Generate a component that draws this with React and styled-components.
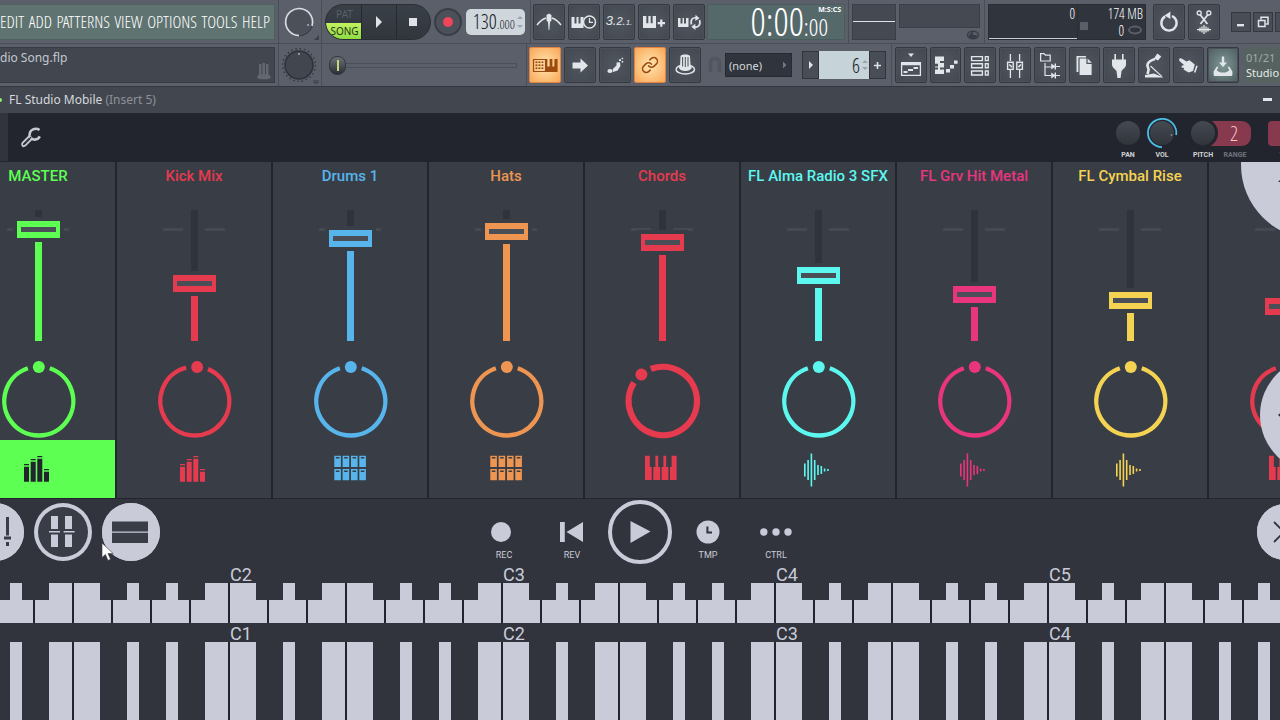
import React, { useState } from 'react';
import styled, { createGlobalStyle, css } from 'styled-components';
import { Link } from 'lucide-react';

const CONDENSED = `'Open Sans Condensed Light', 'Open Sans Condensed', 'Roboto Condensed', 'Open Sans', sans-serif`;
const UI = `'Noto Sans', 'Open Sans', sans-serif`;
const MOBILE = `Roboto, 'Liberation Sans', sans-serif`;

const GREEN = '#5dff53';
const RED = '#e63a4f';
const BLUE = '#57b5ec';
const ORANGE = '#ee9552';
const CYAN = '#5cf8ef';
const PINK = '#e8357d';
const YELLOW = '#f4d352';

const PANEL = '#393d46';
const LINE = '#22252e';
const DECK = '#31343d';
const IVORY = '#c9cbd8';

const CHANNELS = [
  { name: 'MASTER', color: GREEN, level: 103, pan: 0, icon: 'mix', selected: true },
  { name: 'Kick Mix', color: RED, level: 49, pan: 4, icon: 'mix' },
  { name: 'Drums 1', color: BLUE, level: 94, pan: 0, icon: 'pads' },
  { name: 'Hats', color: ORANGE, level: 101, pan: 0, icon: 'pads' },
  { name: 'Chords', color: RED, level: 90, pan: -39, icon: 'piano', thick: true },
  { name: 'FL Alma Radio 3 SFX', color: CYAN, level: 57, pan: 0, icon: 'wave' },
  { name: 'FL Grv Hit Metal', color: PINK, level: 38, pan: 0, icon: 'wave' },
  { name: 'FL Cymbal Rise', color: YELLOW, level: 32, pan: 0, icon: 'wave' },
  { name: '', color: RED, level: 26, pan: 0, icon: 'piano' }
];

const MENU = ['EDIT', 'ADD', 'PATTERNS', 'VIEW', 'OPTIONS', 'TOOLS', 'HELP'];

/* ---------- channel icons ---------- */

const MixGlyph = () => (
  <g>
    {[[2, 13], [8.7, 8], [15.3, 5], [22, 18]].map(([x, y]) => (
      <path key={x} d={`M${x} ${y}h5v1.3h-5zM${x} ${y + 2.8}h5V30.7h-5z`} />
    ))}
  </g>
);

const PadsGlyph = () => (
  <g fillRule='evenodd'>
    {[0.3, 8.6, 17, 25.3].map(x =>
      [4.7, 18].map(y => (
        <path
          key={`${x}-${y}`}
          d={`M${x} ${y}h6.6v11.2h-6.6zM${x + 1.5} ${y + 1.4}v1.5h3.6v-1.5z`}
        />
      ))
    )}
  </g>
);

const PianoGlyph = () => (
  <path
    transform='translate(-1 0)'
    d='M0 4.7H4.8V16H6.7V29H0zM10.4 4.7H13.2V16H15.2V29H8.3V16H10.4zM18.4 4.7H21.2V16H23.4V29H16.6V16H18.4zM26.6 4.7H31.6V29H25V16H26.6z'
  />
);

const WaveGlyph = () => (
  <g>
    {[13, 20, 33, 20, 10, 8, 3, 2].map((h, i) => (
      <rect key={i} x={2 + i * 3.3} y={19 - h / 2} width='1.6' height={h} />
    ))}
  </g>
);

const GLYPHS = { mix: MixGlyph, pads: PadsGlyph, piano: PianoGlyph, wave: WaveGlyph };

/* ---------- toolbar icons, drawn on a 32 x 36 button ---------- */

const Icon = ({ children }) => (
  <svg width='32' height='36' viewBox='0 0 32 36' fill='currentColor' aria-hidden='true'>
    {children}
  </svg>
);

// solid block of white keys with two black notches hanging from the top
const keysPath = (x, y, w, h) => {
  const u = w / 3;
  const n = h * 0.6;
  return `M${x} ${y}H${x + u - 1}V${y + n}H${x + u + 1}V${y}H${x + 2 * u - 1}V${y + n}H${x + 2 * u + 1}V${y}H${x + w}V${y + h}H${x}z`;
};

const TOOLS_TOP = [
  {
    label: 'Metronome',
    icon: (
      <Icon>
        <path d='M4 21C7 17 10 15 13 14M19 14C22 15 25 17 28 21' fill='none' stroke='currentColor' strokeWidth='1.4' />
        <path d='M13.5 11L16 9.5L18.5 11V16.5L17 18L16.4 26H15.6L15 18L13.5 16.5z' />
      </Icon>
    )
  },
  {
    label: 'Wait for input',
    icon: (
      <Icon>
        <path d={keysPath(3.5, 13, 12, 11)} />
        <circle cx='21.5' cy='18' r='6' fill='#464c54' stroke='currentColor' strokeWidth='1.5' />
        <path d='M21.5 14V18.4H25' fill='none' stroke='currentColor' strokeWidth='1.3' />
      </Icon>
    )
  },
  { label: 'Countdown', count: true },
  {
    label: 'Overdub',
    icon: (
      <Icon>
        <path d={keysPath(5, 12, 13, 12)} />
        <path d='M22.2 15.5h2.2v2.5H27v2.2h-2.6v2.6h-2.2v-2.6h-2.6V18h2.6z' />
      </Icon>
    )
  },
  {
    label: 'Loop record',
    icon: (
      <Icon>
        <path d={keysPath(5, 14, 10.5, 9)} />
        <path d='M18.5 20.5C17 15.5 20 13 23.5 14M26.5 16C28 21 25 24 21.2 22.8' fill='none' stroke='currentColor' strokeWidth='1.7' />
        <path d='M22.5 10.8L26.4 14.2L22.3 17zM22.3 19.7L18.3 22.8L22.5 26z' />
      </Icon>
    )
  }
];

const TOOLS_EDIT = [
  {
    label: 'Typing keyboard to piano',
    lit: true,
    icon: (
      <Icon>
        <path d='M4.5 12.5H16.5V24.5H4.5z' fill='none' stroke='currentColor' strokeWidth='1.2' />
        {[15, 18, 21].map(y => [6.5, 9.5, 12.5].map(x => <rect key={`${x}${y}`} x={x} y={y - 0.6} width='1.9' height='1.7' />))}
        <path d='M16 12H18.4V19.5H20.6V12H23.4V19.5H25.4V12H28.6V25H16z' />
      </Icon>
    )
  },
  {
    label: 'Step edit',
    icon: (
      <Icon>
        <path d='M8.5 15.5H16.5V11.5L24 18.5L16.5 25.5V21.5H8.5z' />
      </Icon>
    )
  },
  {
    label: 'Slide notes',
    icon: (
      <Icon>
        <ellipse cx='11' cy='24' rx='2.6' ry='2' />
        <path d='M14 25L13.8 22L17.5 18.5L17.6 15.4L21 15.2L21.4 19L18.6 23.4z' />
        <path d='M20 12.2h2v1.8h-2zM22.6 10.8h1.5v1.5h-1.5zM22.6 14h1.6v1.4h-1.6z' />
      </Icon>
    )
  },
  { label: 'Link controllers', lit: true, link: true },
  {
    label: 'Assistant',
    icon: (
      <Icon>
        <ellipse cx='16.3' cy='22.4' rx='9.2' ry='4.6' fill='none' stroke='currentColor' strokeWidth='1.5' />
        <ellipse cx='16.3' cy='20.6' rx='6.4' ry='3.4' />
        <path d='M11.5 9.2C11.5 6.8 21 6.8 21 9.2L21.6 20H11z' />
        <path d='M13.6 10V19.5M16.3 10V20M19 10V19.5' stroke='#4a5058' strokeWidth='1' />
      </Icon>
    )
  }
];

const TOOLS_WINDOWS = [
  {
    label: 'Playlist',
    icon: (
      <Icon>
        <path d='M13 6.5H19L16 10z' />
        <path d='M6.6 16V28.3H25.4V16' fill='none' stroke='currentColor' strokeWidth='1.3' />
        <path d='M6 15H26V18.2H6zM8.5 24h4v2h-4zM13 22h5v2h-5zM18.5 20h4.5v2h-4.5z' />
      </Icon>
    )
  },
  {
    label: 'Piano roll',
    icon: (
      <Icon>
        <path d='M5 9.5H14V14H10V16H14V20.4H10V22.5H14V27H5V22.5H8V20.4H5V19.6H8V16.8H5z' />
        <path d='M16 22h4v3.4h-4zM20 18h4v3.4h-4zM24 13.4h3.6v3.4h-3.6z' />
      </Icon>
    )
  },
  {
    label: 'Channel rack',
    icon: (
      <Icon>
        <path
          d='M7.6 9.6h10.8v4H7.6zM7.6 16.8h10.8v4H7.6zM7.6 24h10.8v4H7.6zM21.4 9.6h2.8v4h-2.8zM21.4 16.8h2.8v4h-2.8zM21.4 24h2.8v4h-2.8z'
          fill='none'
          stroke='currentColor'
          strokeWidth='1.4'
        />
      </Icon>
    )
  },
  {
    label: 'Mixer',
    icon: (
      <Icon>
        <path d='M11.4 7V14M11.4 23V31M20.6 7V14M20.6 23V31' stroke='currentColor' strokeWidth='1.3' />
        <path d='M8.6 15.2h5.6v7.2H8.6zM17.8 15.2h5.6v7.2h-5.6z' fill='none' stroke='currentColor' strokeWidth='1.4' />
        <path d='M10.3 17.5l2.6 2.6M19.4 20.1l2.6-2.6' stroke='currentColor' strokeWidth='1.5' />
      </Icon>
    )
  },
  {
    label: 'Browser',
    icon: (
      <Icon>
        <path d='M6.6 6.6H10l1.4 1.6h4.8V14H6.6z' fill='none' stroke='currentColor' strokeWidth='1.2' />
        <path d='M11 16V28.5H17M11 20H17' fill='none' stroke='currentColor' strokeWidth='1.2' />
        <path d='M17.2 16.5L21.5 19.5L17.2 22.5zM22 16.5v2.4h4v1.2h-4v2.4h-1.4v-6zM17.2 25.5L21.5 28.5L17.2 31.5zM22 25.5v2.4h4v1.2h-4v2.4h-1.4v-6z' />
      </Icon>
    )
  },
  {
    label: 'Project picker',
    icon: (
      <Icon>
        <path d='M8.5 9H18V10.5H10.4V25H8.5z' />
        <path d='M11.6 11.6H18.4V17H23.6V28H11.6z' />
        <path d='M19.6 11.4L23.8 15.8H19.6z' />
      </Icon>
    )
  },
  {
    label: 'Plugin picker',
    icon: (
      <Icon>
        <path d='M11.4 7H13V12.5H19V7H20.6V12.5H23V17.5C23 20.5 20 22 18.5 24L17.6 31H14.4L13.5 24C12 22 9 20.5 9 17.5V12.5H11.4z' />
      </Icon>
    )
  },
  {
    label: 'Tempo tapper',
    icon: (
      <Icon>
        <path d='M16 11.5L19.3 6.6L23.3 9.4L20 13.6z' />
        <path d='M17 12C12 13.5 9.5 15.5 9.4 18.5L10.6 22.5L9.6 27' fill='none' stroke='currentColor' strokeWidth='2.6' />
        <path d='M7 28L16 26.6L25.5 30.6H7z' />
        <path d='M12.5 19L24 29.6' stroke='currentColor' strokeWidth='1.2' />
      </Icon>
    )
  },
  {
    label: 'Touch keyboards',
    icon: (
      <Icon>
        <path d='M7 12.3C7.5 11 9 11 10 11.8L14.5 14.6L17.5 13.3L22.8 17.5L21 24L16.6 25.4L11.5 22.6L12.2 21L9.4 20.6L9.8 18.8L12 18L7.5 14z' />
        <path d='M22.6 25.6L25 18.8' stroke='currentColor' strokeWidth='1.6' />
      </Icon>
    )
  },
  {
    label: 'Save as new version',
    glow: true,
    icon: (
      <Icon>
        <path d='M14.8 9.5H17.2V15.4H20L16 20L12 15.4H14.8z' />
        <path d='M11.5 19.8H9.6L6.6 24.4V27.4C6.6 28.4 7.2 29 8.2 29H23.8C24.8 29 25.4 28.4 25.4 27.4V24.4L22.4 19.8H20.5L22.4 23.4C21 23.4 21 25.4 16 25.4C11 25.4 11 23.4 9.6 23.4z' />
      </Icon>
    )
  }
];

const UndoIcon = () => (
  <Icon>
    <path d='M12.2 12.4A7.6 7.6 0 1 0 19 12' fill='none' stroke='currentColor' strokeWidth='2.4' />
    <path d='M17.4 7.6V15L11.6 11.6z' />
  </Icon>
);

const CutIcon = () => (
  <Icon>
    <path d='M12 10.5L19.4 20M20 10.5L12.4 20' stroke='currentColor' strokeWidth='1.8' />
    <circle cx='11.2' cy='9' r='2' fill='none' stroke='currentColor' strokeWidth='1.3' />
    <circle cx='20.8' cy='9' r='2' fill='none' stroke='currentColor' strokeWidth='1.3' />
    <path d='M9 25.6H23M12 23.6V27.6M14 22.4V28.6M16 21V30M18 22.4V28.6M20 23.6V27.6' stroke='currentColor' strokeWidth='1.3' />
  </Icon>
);

/* ---------- components ---------- */

const ToolButtons = ({ tools }) =>
  tools.map(({ label, icon, lit, glow, link, count }) => (
    <ToolButton key={label} type='button' aria-label={label} $lit={lit} $glow={glow}>
      {icon}
      {link && <Link size={18} strokeWidth={2} />}
      {count && (
        <Countdown>
          3.<span>2.</span>
          <small>1.</small>
        </Countdown>
      )}
    </ToolButton>
  ));

const Knob = ({ label, size = 40, children }) => (
  <KnobLabel aria-label={label}>
    <svg width={size} height={size} viewBox={`0 0 ${size} ${size}`} aria-hidden='true'>
      {children}
    </svg>
    <GhostRange aria-label={label} />
  </KnobLabel>
);

const Dial = ({ name, color, pan, thick }) => {
  const r = thick ? 34.2 : 34.5;
  const gap = 18.5;
  const point = deg => {
    const a = ((deg - 90) * Math.PI) / 180;
    return `${40.8 + r * Math.cos(a)} ${41 + r * Math.sin(a)}`;
  };
  return (
    <KnobLabel>
      <svg width='80' height='80' viewBox='0 0 80 80' aria-hidden='true'>
        <path
          d={`M${point(pan + gap)}A${r} ${r} 0 1 1 ${point(pan - gap)}`}
          fill='none'
          stroke={color}
          strokeWidth={thick ? 6.2 : 4.4}
        />
        <circle cx='40.8' cy='7' r='6' fill={color} transform={`rotate(${pan} 40.8 41)`} />
      </svg>
      <GhostRange aria-label={`${name} pan`} min='-180' max='180' defaultValue={pan} />
    </KnobLabel>
  );
};

const Channel = ({ channel }) => {
  const [level, setLevel] = useState(channel.level);
  const Glyph = GLYPHS[channel.icon];
  return (
    <Strip>
      <StripName $color={channel.color}>{channel.name}</StripName>
      <Fader
        aria-label={`${channel.name} level`}
        min='0'
        max='114'
        value={level}
        onChange={e => setLevel(Number(e.target.value))}
        $color={channel.color}
        $level={level}
      />
      <Dial {...channel} />
      <StripButton
        type='button'
        aria-label={`${channel.name} channel`}
        $color={channel.color}
        $selected={channel.selected}
      >
        <svg width='32' height='36' viewBox='0 0 32 36' fill='currentColor'>
          <Glyph />
        </svg>
      </StripButton>
    </Strip>
  );
};

const NOTES = ['C', 'C#', 'D', 'D#', 'E', 'F', 'F#', 'G', 'G#', 'A', 'A#', 'B'];

const Keyboard = ({ labels, full }) => (
  <Octaves $full={full}>
    {labels.map((label, i) => (
      <Octave key={i}>
        <OctaveLabel $full={full}>{label}</OctaveLabel>
        <Keys>
          {NOTES.map(note =>
            note.length > 1 ? (
              <BlackKey key={note} type='button' aria-label={note} $full={full} />
            ) : (
              <WhiteKey key={note} type='button' aria-label={note} />
            )
          )}
        </Keys>
      </Octave>
    ))}
  </Octaves>
);

const App = () => {
  return (
    <Page>
      <GlobalStyle />
      <ToolRow>
        <Group $width={279}>
          <Menu>
            {MENU.map(item => (
              <MenuItem key={item} type='button'>
                {item}
              </MenuItem>
            ))}
          </Menu>
        </Group>
        <Group $width={43}>
          <Knob label='Main volume'>
            <circle cx='20' cy='20' r='12' fill='#4b5059' />
            <path d='M20 33.5A13.5 13.5 0 1 1 33 24' fill='none' stroke='#d9dde2' strokeWidth='1.6' />
            <path d='M20 33.5A13.5 13.5 0 0 0 33 24' fill='none' stroke='#3a3f48' strokeWidth='1.6' />
            <circle cx='29' cy='23' r='1' fill='#aab0b8' />
            <path d='M40 33V38H35z' fill='#3a3f48' />
          </Knob>
        </Group>
        <Group $width={209} $gap={3} $pad={3}>
          <Pill>
            <ModeSwitch>
              <ModeButton type='button'>PAT</ModeButton>
              <ModeButton type='button' $on>
                SONG
              </ModeButton>
            </ModeSwitch>
            <PillButton type='button' aria-label='Play'>
              <svg width='12' height='14'>
                <path d='M3 1L9 7L3 13z' fill='#dfe3e8' />
              </svg>
            </PillButton>
            <PillButton type='button' aria-label='Stop'>
              <svg width='8' height='8'>
                <path d='M0 0H8V8H0z' fill='#dfe3e8' />
              </svg>
            </PillButton>
          </Pill>
          <RecordButton type='button' aria-label='Record'>
            <svg width='10' height='10'>
              <circle cx='5' cy='5' r='5' fill='#f0455a' />
            </svg>
          </RecordButton>
          <Tempo>
            130<small>.000</small>
            <Spin $gap={6} />
          </Tempo>
        </Group>
        <Group $width={318} $gap={2} $pad={2}>
          <Tools $width={172}>
            <ToolButtons tools={TOOLS_TOP} />
          </Tools>
          <Clock>
            <ClockUnit>M:S:CS</ClockUnit>
            0:00<small>:00</small>
          </Clock>
        </Group>
        <Group $width={136} $gap={3} $pad={3}>
          <Scope />
          <Meter>
            <Spectrum />
            <svg width='14' height='10' viewBox='0 0 14 10'>
              <ellipse cx='7' cy='5' rx='5.5' ry='3.8' fill='none' stroke='#383c45' strokeWidth='1.5' />
              <path d='M7 1V5H11A4 4 0 0 1 3 5z' fill='#383c45' />
            </svg>
          </Meter>
        </Group>
        <Group $gap={3} $pad={3} $last>
          <Stats>
            <Cpu>0</Cpu>
            <Memory>
              <span>174 MB</span>
              <Voices>
                <svg width='8' height='8'>
                  <path d='M0 0H8V8H0z' fill='#5a5f68' />
                </svg>
                <span>0</span>
                <svg width='16' height='10'>
                  <ellipse cx='8' cy='5' rx='6' ry='3.4' fill='none' stroke='#5a5f68' strokeWidth='2' />
                </svg>
              </Voices>
            </Memory>
          </Stats>
          <HistoryTools>
            <ToolButton type='button' aria-label='Undo'>
              <UndoIcon />
            </ToolButton>
            <ToolButton type='button' aria-label='Cut'>
              <CutIcon />
            </ToolButton>
          </HistoryTools>
          <WindowButtons>
            <WindowButton type='button' aria-label='Minimise'>
              <svg width='12' height='12'>
                <path d='M2 8H9V10.4H2z' fill='#e2e6ea' />
              </svg>
            </WindowButton>
            <WindowButton type='button' aria-label='Restore'>
              <svg width='12' height='12' fill='none' stroke='#e2e6ea' strokeWidth='1.5'>
                <path d='M4 3.5V1.2H11V8H9M1.5 4.5H8V10.5H1.5z' />
              </svg>
            </WindowButton>
            <WindowButton type='button' aria-label='Close'>
              <svg width='12' height='12' stroke='#e2e6ea' strokeWidth='2'>
                <path d='M2 2L10 10M10 2L2 10' />
              </svg>
            </WindowButton>
          </WindowButtons>
        </Group>
      </ToolRow>

      <ToolRow $bottom>
        <Group $width={279}>
          <Hint>
            <span>dio Song.flp</span>
            <svg width='16' height='18' viewBox='0 0 16 18' fill='#626770'>
              <path d='M3 2H5.4V13H3zM6.4 1H9V13H6.4zM10 2H12.4V13H10z' />
              <path d='M2.5 12.4H13L15 15.4C14 18 2 18 1 15.4z' />
            </svg>
          </Hint>
        </Group>
        <Group $width={43}>
          <Knob label='Main pitch'>
            <circle cx='20' cy='20' r='16.4' fill='none' stroke='#30343c' strokeWidth='1.4' strokeDasharray='1.4 2.9' />
            <circle cx='20' cy='20' r='14' fill='#42464f' stroke='#2f333b' strokeWidth='1.6' />
            <circle cx='20' cy='9' r='1' fill='#aab0b8' />
            <path d='M35 35V38H39V35M37 35V38' fill='none' stroke='#3a3f48' />
          </Knob>
        </Group>
        <Group $width={205} $pad={6}>
          <SongPosition aria-label='Song position' defaultValue='0' />
        </Group>
        <Group $width={365} $pad={2}>
          <Tools $width={172}>
            <ToolButtons tools={TOOLS_EDIT} />
          </Tools>
          <Snap>
            <svg width='14' height='18' viewBox='0 0 14 18' aria-hidden='true'>
              <path d='M2.5 16V7A4.5 4.5 0 0 1 11.5 7V16' fill='none' stroke='#50555e' strokeWidth='3.6' />
            </svg>
            <SnapSelect aria-label='Snap' defaultValue='none'>
              <option value='none'>(none)</option>
              <option value='line'>Line</option>
            </SnapSelect>
          </Snap>
          <Stepper>
            <StepButton type='button' aria-label='Patterns'>
              <svg width='6' height='8'>
                <path d='M1 0L5 4L1 8z' fill='#dfe3e8' />
              </svg>
            </StepButton>
            <StepField>
              <input aria-label='Pattern' defaultValue='6' />
              <Spin $gap={4} />
            </StepField>
            <StepButton type='button' aria-label='Add pattern'>
              <svg width='9' height='9'>
                <path d='M3.7 1H5.3V3.7H8V5.3H5.3V8H3.7V5.3H1V3.7H3.7z' fill='#dfe3e8' />
              </svg>
            </StepButton>
          </Stepper>
        </Group>
        <Group $gap={4} $pad={3} $last>
          <Tools $width={344}>
            <ToolButtons tools={TOOLS_WINDOWS} />
          </Tools>
          <News>
            <span>01/21</span>
            <b>Studio</b>
          </News>
        </Group>
      </ToolRow>

      <TitleBar>
        <Led />
        <Title>
          FL Studio Mobile <span>(Insert 5)</span>
        </Title>
        <TitleButton type='button' aria-label='Minimise plugin'>
          <svg width='10' height='4'>
            <path d='M0 0H9V3H0z' fill='#e2e6ea' />
          </svg>
        </TitleButton>
      </TitleBar>

      <PluginBar>
        <WrenchButton type='button' aria-label='Plugin settings'>
          <svg width='22' height='22' viewBox='0 0 22 22' fill='none' stroke='#c6c9d2'>
            <path d='M19.6 4C15.6 1.4 9.4 3.2 9.6 9.4C10 14 17 15.4 19.8 10.4' strokeWidth='2.6' />
            <path d='M9.4 10L2.6 16.8C1 19 3 21.2 5.2 19.6L12 12.8' strokeWidth='1.9' />
            <path d='M11.2 11L5 17.2' stroke='#3a3d46' strokeWidth='1.2' />
          </svg>
        </WrenchButton>
        <PluginKnobs>
          <PluginKnob>
            <Knob label='Pan' size={32}>
              <circle cx='16' cy='16' r='12' fill='url(#cap)' />
            </Knob>
            PAN
          </PluginKnob>
          <PluginKnob>
            <Knob label='Volume' size={32}>
              <circle cx='16' cy='16' r='12' fill='url(#cap)' />
              <path d='M16 30.2A14.2 14.2 0 1 1 30.2 18' fill='none' stroke='#4cc0e8' strokeWidth='1.8' />
              <circle cx='25.5' cy='18' r='0.8' fill='#aab0b8' />
            </Knob>
            VOL
          </PluginKnob>
          <PitchRange>
            <PluginKnob $front>
              <Knob label='Pitch' size={32}>
                <circle cx='16' cy='16' r='15' fill={LINE} />
                <circle cx='16' cy='16' r='12' fill='url(#cap)' />
              </Knob>
              PITCH
            </PluginKnob>
            <PluginKnob $dim>
              <RangeBox>
                <span>2</span>
              </RangeBox>
              RANGE
            </PluginKnob>
          </PitchRange>
          <PluginKnob>
            <TimeBox />
            TIME
          </PluginKnob>
        </PluginKnobs>
        <svg width='0' height='0' aria-hidden='true'>
          <defs>
            <linearGradient id='cap' x1='0' y1='0' x2='0' y2='1'>
              <stop offset='0' stopColor='#454951' />
              <stop offset='1' stopColor='#30343b' />
            </linearGradient>
          </defs>
        </svg>
      </PluginBar>

      <Mixer>
        <Strips>
          {CHANNELS.map(channel => (
            <Channel key={channel.name} channel={channel} />
          ))}
        </Strips>
        <CornerButton type='button' aria-label='Add' $size={148} $top={-71} $right={-109}>
          <svg width='148' height='148'>
            <path d='M37 91L44 84V91z' fill={DECK} />
          </svg>
        </CornerButton>
        <CornerButton type='button' aria-label='Previous' $size={116} $top={195} $right={-96}>
          <svg width='116' height='116'>
            <path d='M18 58L25 52V64z' fill={DECK} />
          </svg>
        </CornerButton>
      </Mixer>

      <Transport>
        <ViewButtons>
          <RoundButton type='button' aria-label='Drum pads'>
            <svg width='58' height='58'>
              <path d='M40 14H43V32.6H40zM38 33.6H45V36.6H38zM40 39H43V43H40z' fill={PANEL} />
            </svg>
          </RoundButton>
          <RoundButton type='button' aria-label='Mixer view' $outline>
            <svg width='58' height='58' fill={IVORY}>
              <path d='M17 13H24V26H17zM31 13H38V26H31zM17 31.5H24V44H17zM31 31.5H38V44H31zM15 28H26V29.6H15zM29.6 28H40.6V29.6H29.6z' />
            </svg>
          </RoundButton>
          <RoundButton type='button' aria-label='Keyboard view'>
            <svg width='58' height='58'>
              <path d='M10 18.5H46V28.4H10zM10 29.8H46V40H10z' fill={PANEL} />
            </svg>
          </RoundButton>
          <Pointer width='14' height='20' viewBox='0 0 14 20' aria-hidden='true'>
            <path d='M1 1V15.6L4.4 12.4L7 18.4L9.6 17.3L7 11.6H12.2z' fill='#fff' stroke='#33363f' strokeWidth='0.6' />
          </Pointer>
        </ViewButtons>
        <TransportButtons>
          <TransportButton type='button'>
            <svg width='32' height='24'>
              <circle cx='13' cy='12' r='10' fill={IVORY} />
            </svg>
            REC
          </TransportButton>
          <TransportButton type='button'>
            <svg width='32' height='24'>
              <path d='M4 2H8.8V22H4zM27 2V22L10.5 12z' fill={IVORY} />
            </svg>
            REV
          </TransportButton>
          <PlayButton type='button' aria-label='Play song'>
            <svg width='56' height='56'>
              <path d='M18.5 17L38.5 27.5L18.5 39z' fill={IVORY} />
            </svg>
          </PlayButton>
          <TransportButton type='button'>
            <svg width='32' height='24'>
              <circle cx='16' cy='12' r='11.5' fill={IVORY} />
              <path d='M15.4 6.5V12.6H20' fill='none' stroke={DECK} strokeWidth='2' />
            </svg>
            TMP
          </TransportButton>
          <TransportButton type='button'>
            <svg width='32' height='24' fill={IVORY}>
              <circle cx='3.8' cy='12' r='3.7' />
              <circle cx='16' cy='12' r='3.7' />
              <circle cx='28' cy='12' r='3.7' />
            </svg>
            CTRL
          </TransportButton>
        </TransportButtons>
        <CloseSlot>
          <RoundButton type='button' aria-label='Close editor' $small>
            <svg width='56' height='56'>
              <path d='M17 18L37 38M37 18L17 38' stroke={DECK} strokeWidth='1.8' />
            </svg>
          </RoundButton>
        </CloseSlot>
      </Transport>

      <Keyboard labels={['', 'C2', 'C3', 'C4', 'C5']} />
      <Keyboard labels={['', 'C1', 'C2', 'C3', 'C4']} full />
    </Page>
  );
};

/* ---------- styles ---------- */

const GlobalStyle = createGlobalStyle`
  *, *::before, *::after {
    box-sizing: border-box;
  }

  body {
    margin: 0;
    background: ${DECK};
  }

  button, input, select {
    margin: 0;
    padding: 0;
    border: 0;
    background: none;
    color: inherit;
    font: inherit;
  }

  svg {
    display: block;
    flex-shrink: 0;
    overflow: visible;
  }
`;

const center = css`
  display: flex;
  align-items: center;
  justify-content: center;
`;

const condensed = css`
  font-family: ${CONDENSED};
  font-weight: 300;
`;

const Page = styled.div`
  display: flex;
  flex-direction: column;
  min-height: 100vh;
  overflow: hidden;
  background: ${DECK};
  font-family: ${UI};
`;

const ToolRow = styled.div`
  display: flex;
  height: ${props => (props.$bottom ? 43 : 44)}px;
  background: #5a5f69;
  border-bottom: 1px solid ${props => (props.$bottom ? '#33373f' : '#484d56')};
`;

const Group = styled.div`
  display: flex;
  flex: ${props => (props.$last ? '1 0 auto' : `0 0 ${props.$width}px`)};
  align-items: center;
  gap: ${props => props.$gap || 0}px;
  padding-left: ${props => props.$pad || 0}px;
  border-right: ${props => (props.$last ? 0 : 1)}px solid #484d56;
`;

const Menu = styled.nav`
  display: flex;
  align-items: center;
  justify-content: space-between;
  width: 275px;
  height: 36px;
  padding-right: 4px;
  background: #5f7371;
  border: solid #50605f;
  border-width: 1px 1px 1px 0;
`;

const MenuItem = styled.button`
  ${condensed};
  color: #fff;
  font-size: 17px;
  line-height: 20px;
`;

const KnobLabel = styled.label`
  position: relative;
  display: block;
`;

const GhostRange = styled.input.attrs({ type: 'range' })`
  position: absolute;
  inset: 0;
  width: 100%;
  height: 100%;
  opacity: 0;
  cursor: pointer;
`;

const Pill = styled.div`
  display: flex;
  width: 106px;
  height: 36px;
  overflow: hidden;
  background: linear-gradient(#3a4047, #31363d);
  border: 1px solid #2a2e35;
  border-radius: 18px;
`;

const ModeSwitch = styled.div`
  display: flex;
  flex-direction: column;
  width: 35px;
`;

const ModeButton = styled.button`
  height: ${props => (props.$on ? 16 : 18)}px;
  padding-left: 2px;
  color: ${props => (props.$on ? '#26331b' : '#596068')};
  background: ${props => (props.$on ? 'linear-gradient(#c2f25f, #8edc45)' : 'none')};
  font-size: 10px;
  line-height: 16px;
`;

const PillButton = styled.button`
  ${center};
  flex: 1;
  border-left: 1px solid #262a30;
`;

const RecordButton = styled.button`
  ${center};
  width: 28px;
  height: 28px;
  background: #4b5059;
  border: 2px solid #393e46;
  border-radius: 50%;
`;

const Tempo = styled.output`
  ${condensed};
  display: flex;
  align-items: baseline;
  justify-content: flex-end;
  width: 59px;
  height: 26px;
  margin-left: 1px;
  padding-right: 2px;
  background: #cfd7dc;
  border-radius: 5px;
  color: #14181c;
  font-size: 20px;
  line-height: 26px;

  small {
    font-size: 13px;
  }
`;

const Spin = styled.span`
  display: flex;
  flex-direction: column;
  gap: ${props => props.$gap}px;
  align-self: center;
  margin-left: 2px;

  &::before,
  &::after {
    content: '';
    border: 3px solid transparent;
    border-top-width: 0;
    border-bottom-color: #9aa5ad;
  }

  &::after {
    border-top: 3px solid #9aa5ad;
    border-bottom: 0;
  }
`;

const Tools = styled.div`
  display: flex;
  gap: 3px;
  width: ${props => props.$width}px;
`;

const ToolButton = styled.button`
  ${center};
  flex: 1 1 0;
  min-width: 0;
  height: 36px;
  border: 1px solid #343940;
  border-radius: 2px;
  color: #e2e6ea;
  background: radial-gradient(#50565f, #434850);
  box-shadow: inset 0 0 0 1px #4b5059;

  ${props =>
    props.$lit &&
    css`
      color: #9c4a10;
      background: radial-gradient(#ffe0a8 10%, #f9a656);
      border-color: #e08340;
      box-shadow: none;
    `};

  ${props =>
    props.$glow &&
    css`
      background: radial-gradient(#7f9896, #4c5a5e);
    `};
`;

const Countdown = styled.span`
  display: flex;
  align-items: baseline;
  font-family: 'Liberation Sans', sans-serif;
  font-size: 13px;
  font-style: italic;
  line-height: 16px;

  span {
    font-size: 11px;
  }

  small {
    font-size: 8px;
  }
`;

const Clock = styled.div`
  ${condensed};
  position: relative;
  display: flex;
  align-items: baseline;
  justify-content: flex-end;
  width: 138px;
  height: 36px;
  padding-right: 16px;
  background: #55686a;
  border: 1px solid #4b5c5c;
  color: #fff;
  font-size: 38px;
  line-height: 32px;

  small {
    font-size: 24px;
  }
`;

const ClockUnit = styled.span`
  position: absolute;
  top: 0;
  right: 3px;
  font-family: ${UI};
  font-size: 7px;
  font-weight: 700;
  line-height: 10px;
`;

const Scope = styled.div`
  width: 44px;
  height: 36px;
  background: linear-gradient(#dfe3e8, #dfe3e8) center / 100% 1px no-repeat #454951;
  border: 1px solid #3a3e46;
`;

const Meter = styled.div`
  display: flex;
  flex-direction: column;
  align-items: flex-end;
  gap: 2px;
  width: 81px;
  height: 36px;
`;

const Spectrum = styled.div`
  width: 100%;
  height: 25px;
  background: #454951;
  border: 1px solid #3a3e46;
`;

const Stats = styled.div`
  ${condensed};
  display: flex;
  width: 158px;
  height: 36px;
  background: #30343c;
  border: 1px solid #292d34;
  color: #fff;
  font-size: 14px;
  line-height: 17px;
`;

const Cpu = styled.div`
  flex: 1;
  padding-right: 2px;
  border-bottom: 1px solid #c8ccd2;
  text-align: right;
`;

const Memory = styled.div`
  display: flex;
  flex-direction: column;
  width: 68px;
  padding-right: 2px;
  border-left: 1px solid #292d34;
  text-align: right;
`;

const Voices = styled.div`
  display: flex;
  align-items: center;
  justify-content: flex-end;
  gap: 3px;

  svg:first-child {
    align-self: flex-start;
    margin-right: auto;
    margin-left: 2px;
  }
`;

const HistoryTools = styled.div`
  display: flex;
  gap: 3px;
  width: 67px;
  margin-left: 4px;
`;

const WindowButtons = styled.div`
  display: flex;
  gap: 2px;
  margin-left: 8px;
`;

const WindowButton = styled.button`
  ${center};
  width: 20px;
  height: 20px;
  background: #484d56;
  border: 1px solid #343940;
`;

const Hint = styled.div`
  display: flex;
  align-items: flex-end;
  justify-content: space-between;
  width: 275px;
  height: 36px;
  padding: 0 2px 2px 0;
  background: #42464f;
  border: solid #373b43;
  border-width: 1px 1px 1px 0;
  color: #c3c8ce;
  font-size: 12px;

  span {
    align-self: flex-start;
    line-height: 20px;
  }
`;

const SongPosition = styled.input.attrs({ type: 'range' })`
  appearance: none;
  width: 189px;
  height: 20px;

  &::-webkit-slider-runnable-track {
    height: 5px;
    margin-left: 8px;
    background: #5a5f69;
    border: 1px solid #4a4f58;
  }

  &::-webkit-slider-thumb {
    appearance: none;
    width: 17px;
    height: 19px;
    margin-top: -8px;
    margin-left: -8px;
    background: linear-gradient(#c6d47a, #c6d47a) center / 2px 11px no-repeat,
      linear-gradient(#6b7077, #2b2f35);
    border: 1px solid #33373e;
    border-radius: 8px;
  }
`;

const Snap = styled.div`
  display: flex;
  align-items: center;
  gap: 3px;
  margin-left: 7px;
`;

const SnapSelect = styled.select`
  appearance: none;
  width: 67px;
  height: 24px;
  padding-left: 3px;
  color: #d5d9de;
  background: conic-gradient(from 45deg at 100% 50%, transparent 180deg, #70757e 0 270deg, transparent 0)
      right 4px center / 4px 8px no-repeat,
    #30343c;
  border: 1px solid #262a31;
  font-size: 11px;
`;

const Stepper = styled.div`
  display: flex;
  align-items: center;
  height: 28px;
  margin-left: 10px;
`;

const StepButton = styled.button`
  ${center};
  width: 17px;
  height: 28px;
  background: #484d56;
  border: 1px solid #30343c;
`;

const StepField = styled.div`
  ${center};
  ${condensed};
  width: 50px;
  height: 28px;
  padding-right: 1px;
  background: #c6d4d9;
  color: #14181c;
  font-size: 20px;

  input {
    flex: 1;
    min-width: 0;
    text-align: right;
  }
`;

const News = styled.div`
  flex: 1;
  height: 36px;
  padding: 3px 0 0 3px;
  background: #55625f;
  color: #9eaaa9;
  font-size: 11px;
  line-height: 15px;

  span,
  b {
    display: block;
    font-weight: 400;
  }

  b {
    color: #e6ebeb;
  }
`;

const TitleBar = styled.header`
  display: flex;
  align-items: center;
  height: 26px;
  padding-right: 7px;
  background: #42464f;
`;

const Led = styled.span`
  width: 2px;
  height: 4px;
  background: #8cf06a;
  border-radius: 0 2px 2px 0;
`;

const Title = styled.h1`
  flex: 1;
  margin: 0 0 0 7px;
  color: #d5d8dd;
  font-size: 12px;
  font-weight: 400;
  line-height: 20px;

  span {
    color: #8d9199;
  }
`;

const TitleButton = styled.button`
  ${center};
  width: 10px;
  height: 20px;
`;

const PluginBar = styled.div`
  display: flex;
  align-items: center;
  justify-content: space-between;
  height: 48px;
  overflow: hidden;
  background: ${LINE};
  border-left: 8px solid ${DECK};
`;

const WrenchButton = styled.button`
  margin-left: 12px;
`;

const PluginKnobs = styled.div`
  display: flex;
  gap: 2px;
  margin-right: -28px;
  margin-left: auto;
`;

const PluginKnob = styled.div`
  position: relative;
  z-index: ${props => (props.$front ? 1 : 0)};
  display: flex;
  flex-direction: column;
  align-items: center;
  min-width: 32px;
  height: 40px;
  color: ${props => (props.$dim ? '#70737b' : '#d0d3d8')};
  font-family: ${MOBILE};
  font-size: 7px;
  font-weight: 700;
  line-height: 12px;
`;

const PitchRange = styled.div`
  display: flex;
  margin: 0 15px 0 7px;
`;

const RangeBox = styled.div`
  ${condensed};
  display: flex;
  flex-shrink: 0;
  align-items: center;
  justify-content: flex-end;
  width: 40px;
  height: 25px;
  margin: 4px 0 3px -8px;
  padding-right: 13px;
  background: #87394d;
  border-radius: 0 9px 9px 0;
  color: #ffc4c8;
  font-size: 20px;
`;

const TimeBox = styled.div`
  flex-shrink: 0;
  width: 40px;
  height: 25px;
  margin: 4px 0 3px;
  background: #87394d;
  border-radius: 4px;
`;

const Mixer = styled.main`
  position: relative;
  overflow: hidden;
  border: solid ${LINE};
  border-width: 1px 0;
`;

const Strips = styled.div`
  display: flex;
  margin-left: -39px;
`;

const Strip = styled.section`
  display: flex;
  flex: 0 0 156px;
  flex-direction: column;
  align-items: center;
  padding-top: 4px;
  background: ${PANEL};
  border-right: 2px solid ${LINE};
`;

const StripName = styled.h2`
  height: 20px;
  margin: 0 0 24px;
  color: ${props => props.$color};
  font-family: ${MOBILE};
  font-size: 15px;
  font-weight: 500;
  line-height: 20px;
  white-space: nowrap;
`;

const Fader = styled.input.attrs({ type: 'range' })`
  appearance: none;
  writing-mode: vertical-lr;
  direction: rtl;
  width: 62px;
  height: 131px;
  margin-bottom: 19px;
  background: linear-gradient(to top, ${props => props.$color} ${props => props.$level + 8}px, #30333b 0)
      center / 7px 100% no-repeat,
    linear-gradient(#454951, #454951) 0 18px / 20px 3px no-repeat,
    linear-gradient(#454951, #454951) 100% 18px / 20px 3px no-repeat;

  &::-webkit-slider-runnable-track {
    width: 43px;
    height: 100%;
  }

  &::-webkit-slider-thumb {
    appearance: none;
    width: 43px;
    height: 17px;
    background: linear-gradient(#4a4e57, #4a4e57) center / 35px 5px no-repeat ${props => props.$color};
    box-shadow: 0 0 0 4px ${PANEL};
  }
`;

const StripButton = styled.button`
  ${center};
  width: 100%;
  height: 58px;
  color: ${props => (props.$selected ? LINE : props.$color)};
  background: ${props => (props.$selected ? props.$color : 'none')};
`;

const CornerButton = styled.button`
  position: absolute;
  top: ${props => props.$top}px;
  right: ${props => props.$right}px;
  width: ${props => props.$size}px;
  height: ${props => props.$size}px;
  background: ${IVORY};
  border-radius: 50%;
`;

const Transport = styled.div`
  display: grid;
  grid-template-columns: 1fr auto 1fr;
  align-items: center;
  height: 67px;
  padding-bottom: 2px;
`;

const ViewButtons = styled.div`
  position: relative;
  display: flex;
  gap: 10px;
  margin-left: -34px;
`;

const RoundButton = styled.button`
  ${center};
  width: ${props => (props.$small ? 56 : 58)}px;
  height: ${props => (props.$small ? 56 : 58)}px;
  background: ${props => (props.$outline ? PANEL : IVORY)};
  border-radius: 50%;
  box-shadow: inset 0 0 0 4px ${IVORY};
`;

const Pointer = styled.svg`
  position: absolute;
  top: 39px;
  left: 135px;
`;

const TransportButtons = styled.div`
  display: flex;
  align-items: center;
`;

const TransportButton = styled.button`
  display: flex;
  flex-direction: column;
  align-items: center;
  gap: 5px;
  width: 68px;
  padding-top: 17px;
  color: ${IVORY};
  font-family: ${MOBILE};
  font-size: 9px;
  line-height: 12px;
`;

const PlayButton = styled.button`
  ${center};
  width: 64px;
  height: 64px;
  margin: 0 2px;
  border: 4px solid ${IVORY};
  border-radius: 50%;
`;

const CloseSlot = styled.div`
  display: flex;
  justify-content: flex-end;
  margin-right: -33px;
`;

const Octaves = styled.div`
  display: flex;
  flex: ${props => (props.$full ? '1 0 97px' : '0 0 57px')};
  margin-left: -43px;
`;

const Octave = styled.div`
  display: flex;
  flex: 0 0 273px;
  flex-direction: column;
`;

const OctaveLabel = styled.div`
  height: ${props => (props.$full ? 19 : 17)}px;
  padding-top: ${props => (props.$full ? 2 : 0)}px;
  color: ${IVORY};
  font-family: ${MOBILE};
  font-size: 18px;
  line-height: 17px;
`;

const Keys = styled.div`
  display: flex;
  flex: 1;
  align-items: stretch;
`;

const WhiteKey = styled.button`
  flex: 0 0 39px;
  background: ${IVORY};
  border-right: 2px solid ${LINE};
`;

const BlackKey = styled.button`
  position: relative;
  flex: 0 0 27px;
  height: ${props => (props.$full ? '100%' : '17px')};
  margin: 0 -14px 0 -13px;
  background: ${DECK};
`;

export default App;
